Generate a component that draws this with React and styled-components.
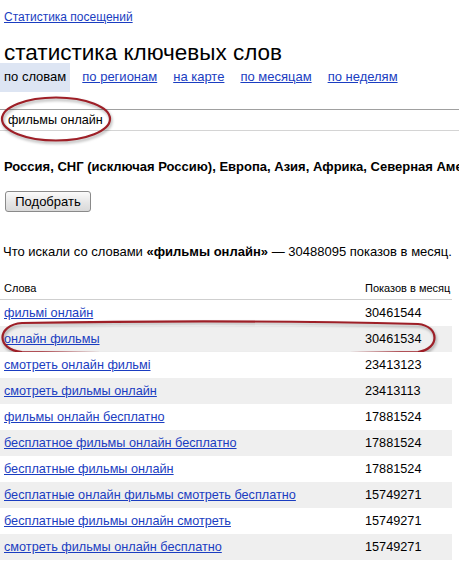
import React from "react";
import styled, { createGlobalStyle } from "styled-components";

const GlobalStyle = createGlobalStyle`
  body {
    margin: 0;
    background: #fff;
    font-family: "Liberation Sans", Arial, sans-serif;
    color: #000;
  }
`;

const rows = [
  ["фильмі онлайн", "30461544"],
  ["онлайн фильмы", "30461534", true],
  ["смотреть онлайн фильмі", "23413123"],
  ["смотреть фильмы онлайн", "23413113"],
  ["фильмы онлайн бесплатно", "17881524"],
  ["бесплатное фильмы онлайн бесплатно", "17881524"],
  ["бесплатные фильмы онлайн", "17881524"],
  ["бесплатные онлайн фильмы смотреть бесплатно", "15749271"],
  ["бесплатные фильмы онлайн смотреть", "15749271"],
  ["смотреть фильмы онлайн бесплатно", "15749271"],
];

const tabs = ["по словам", "по регионам", "на карте", "по месяцам", "по неделям"];

const Page = styled.div`
  width: 459px;
  height: 564px;
  overflow: hidden;
  font-size: 13px;
`;

const Link = styled.a`
  color: #1a3dc1;
  text-decoration: underline;
  cursor: pointer;
`;

const TopLink = styled(Link)`
  display: block;
  margin: 9px 0 0 4px;
  font-size: 12px;
  line-height: 16px;
  width: max-content;
`;

const Title = styled.h1`
  margin: 18px 0 0 4px;
  font-size: 22.5px;
  font-weight: normal;
  line-height: 20px;
`;

const Tabs = styled.div`
  display: flex;
  gap: 8px;
  height: 29px;
`;

const Tab = styled.span`
  padding: 0 4px;
  line-height: 27px;
  background: ${(p) => (p.$active ? "#dde5f3" : "transparent")};
  color: ${(p) => (p.$active ? "#000" : "#1a3dc1")};
  text-decoration: ${(p) => (p.$active ? "none" : "underline")};
`;

const SearchField = styled.div`
  position: relative;
  margin-top: 17px;
`;

const Input = styled.div`
  height: 20px;
  border-top: 1px solid #a0a0a0;
  border-bottom: 1px solid #d4d4d4;
  padding-left: 8px;
  line-height: 20px;
  font-size: 12.6px;
  white-space: nowrap;
`;

const Ring = styled.svg`
  position: absolute;
  overflow: visible;
  pointer-events: none;
  filter: drop-shadow(1px 2px 1.5px rgba(0, 0, 0, 0.35));
`;

const Regions = styled.div`
  margin: 28px 0 0 4px;
  font-weight: bold;
  font-size: 13px;
  line-height: 16px;
  white-space: nowrap;
  overflow: hidden;
`;

const Button = styled.button`
  display: block;
  margin: 16px 0 0 5px;
  width: 86px;
  height: 21px;
  padding: 0;
  border: 1px solid #8a8a8a;
  border-radius: 3px;
  background: linear-gradient(#fbfbfb, #e6e6e6 55%, #d9d9d9);
  font-family: inherit;
  font-size: 13px;
  color: #000;
`;

const Summary = styled.p`
  margin: 32px 0 0 3px;
  line-height: 16px;
  font-size: 13px;
  white-space: nowrap;
`;

const Table = styled.div`
  margin-top: 16px;
  width: 452px;
`;

const Row = styled.div`
  position: relative;
  display: grid;
  grid-template-columns: 1fr 87px;
  align-items: center;
  height: ${(p) => (p.$head ? "23px" : "26px")};
  background: ${(p) => (p.$shaded ? "#efefef" : "#fff")};
  border-bottom: ${(p) => (p.$head ? "1px solid #cfcfcf" : "none")};
  font-size: ${(p) => (p.$head ? "11px" : "12.7px")};
`;

const Word = styled.div`
  padding-left: 4px;
  white-space: nowrap;
`;

const Count = styled.div`
  white-space: nowrap;
`;

const RED = "#9e1f27";

export default function App() {
  return (
    <Page>
      <GlobalStyle />
      <TopLink>Статистика посещений</TopLink>
      <Title>статистика ключевых слов</Title>
      <Tabs>
        {tabs.map((t, i) => (
          <Tab key={t} $active={i === 0}>
            {t}
          </Tab>
        ))}
      </Tabs>
      <SearchField>
        <Input>фильмы онлайн</Input>
        <Ring
          width="110"
          height="44"
          viewBox="0 0 110 44"
          style={{ left: 1, top: -12 }}
        >
          <ellipse
            cx="55"
            cy="22"
            rx="54"
            ry="21.5"
            fill="none"
            stroke={RED}
            strokeWidth="2.2"
          />
        </Ring>
      </SearchField>
      <Regions>
        Россия, СНГ (исключая Россию), Европа, Азия, Африка, Северная Америка
      </Regions>
      <Button>Подобрать</Button>
      <Summary>
        Что искали со словами <b>«фильмы онлайн»</b> — 30488095 показов в
        месяц.
      </Summary>
      <Table>
        <Row $head>
          <Word>Слова</Word>
          <Count>Показов в месяц</Count>
        </Row>
        {rows.map(([w, c, marked], i) => (
          <Row key={i} $shaded={i % 2 === 1}>
            <Word>
              <Link>{w}</Link>
            </Word>
            <Count>{c}</Count>
            {marked && (
              <Ring
                width="437"
                height="33"
                viewBox="0 0 437 33"
                style={{ left: 0, top: -5 }}
              >
                <path
                  d="M22 2 C 140 0, 300 0, 418 3 C 440 5, 440 28, 418 31 C 300 33, 140 33, 22 31 C -4 29, -4 4, 22 2 Z"
                  fill="none"
                  stroke={RED}
                  strokeWidth="2.2"
                />
              </Ring>
            )}
          </Row>
        ))}
      </Table>
    </Page>
  );
}
